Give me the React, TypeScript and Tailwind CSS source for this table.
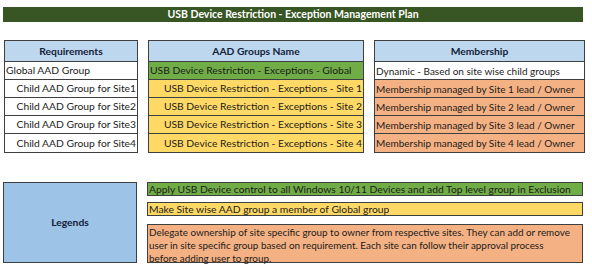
import React from "react";

const font = { fontFamily: "Lato, 'Open Sans', sans-serif" };

function Table({
  title,
  rows,
  width,
  size,
}: {
  title: string;
  rows: { text: string; bg: string; align: "left" | "right" }[];
  width: string;
  size: string;
}) {
  return (
    <div className={`${width} border border-[#3f3f3f] flex flex-col`}>
      <div className="h-[21px] bg-[#bdd7ee] flex items-center justify-center font-bold text-[10.3px] text-[#13213a] border-b border-[#3f3f3f]">
        {title}
      </div>
      {rows.map((r, i) => (
        <div
          key={i}
          className={`h-[18px] flex items-center px-[1px] whitespace-nowrap ${size} ${r.bg} ${
            r.align === "right" ? "justify-end" : "justify-start"
          } ${i < rows.length - 1 ? "border-b border-[#3f3f3f]" : ""}`}
        >
          {r.text}
        </div>
      ))}
    </div>
  );
}

export default function App() {
  const t1 = [
    { text: "Global AAD Group", bg: "bg-white", align: "left" as const },
    { text: "Child AAD Group for Site1", bg: "bg-white", align: "right" as const },
    { text: "Child AAD Group for Site2", bg: "bg-white", align: "right" as const },
    { text: "Child AAD Group for Site3", bg: "bg-white", align: "right" as const },
    { text: "Child AAD Group for Site4", bg: "bg-white", align: "right" as const },
  ];
  const t2 = [
    { text: "USB Device Restriction - Exceptions - Global", bg: "bg-[#70ad47]", align: "left" as const },
    { text: "USB Device Restriction - Exceptions - Site 1", bg: "bg-[#ffd966]", align: "right" as const },
    { text: "USB Device Restriction - Exceptions - Site 2", bg: "bg-[#ffd966]", align: "right" as const },
    { text: "USB Device Restriction - Exceptions - Site 3", bg: "bg-[#ffd966]", align: "right" as const },
    { text: "USB Device Restriction - Exceptions - Site 4", bg: "bg-[#ffd966]", align: "right" as const },
  ];
  const t3 = [
    { text: "Dynamic - Based on site wise child groups", bg: "bg-white", align: "left" as const },
    { text: "Membership managed by Site 1 lead / Owner", bg: "bg-[#f4b183]", align: "left" as const },
    { text: "Membership managed by Site 2 lead / Owner", bg: "bg-[#f4b183]", align: "left" as const },
    { text: "Membership managed by Site 3 lead / Owner", bg: "bg-[#f4b183]", align: "left" as const },
    { text: "Membership managed by Site 4 lead / Owner", bg: "bg-[#f4b183]", align: "left" as const },
  ];
  return (
    <div className="w-[592px] h-[270px] bg-white text-[10.3px] leading-none text-[#1c1c1c]" style={font}>
      <div className="pt-[7px] px-[3px] w-[592px]">
        <div className="w-[580px] h-[15px] bg-[#375623] text-white font-bold text-[10.5px] flex items-center justify-center">
          USB Device Restriction - Exception Management Plan
        </div>
      </div>
      <div className="mt-[18px] flex pl-[4px] gap-[10px]">
        <Table title="Requirements" rows={t1} width="w-[134px]" size="text-[10.3px]" />
        <Table title="AAD Groups Name" rows={t2} width="w-[216px]" size="text-[10.3px]" />
        <Table title="Membership" rows={t3} width="w-[211px]" size="text-[10px]" />
      </div>
      <div className="mt-[29px] flex pl-[3px] gap-[10px]">
        <div className="w-[134px] h-[81px] bg-[#9dc3e6] border border-[#3f3f3f] flex items-center justify-center font-bold text-[#13213a]">
          Legends
        </div>
        <div className="w-[436px] flex flex-col">
          <div className="h-[14px] bg-[#70ad47] border border-[#3f3f3f] flex items-center px-[1px] whitespace-nowrap text-[10.3px]">
            Apply USB Device control to all Windows 10/11 Devices and add Top level group in Exclusion
          </div>
          <div className="mt-[6px] h-[14px] bg-[#ffd966] border border-[#3f3f3f] flex items-center px-[1px] whitespace-nowrap text-[10.3px]">
            Make Site wise AAD group a member of Global group
          </div>
          <div className="mt-[8px] h-[39px] bg-[#f4b183] border border-[#3f3f3f] px-[1px] pt-[1px] leading-[13px] whitespace-nowrap text-[9.9px]">
            Delegate ownership of site specific group to owner from respective sites. They can add or remove
            <br />
            user in site specific group based on requirement. Each site can follow their approval process
            <br />
            before adding user to group.
          </div>
        </div>
      </div>
    </div>
  );
}
